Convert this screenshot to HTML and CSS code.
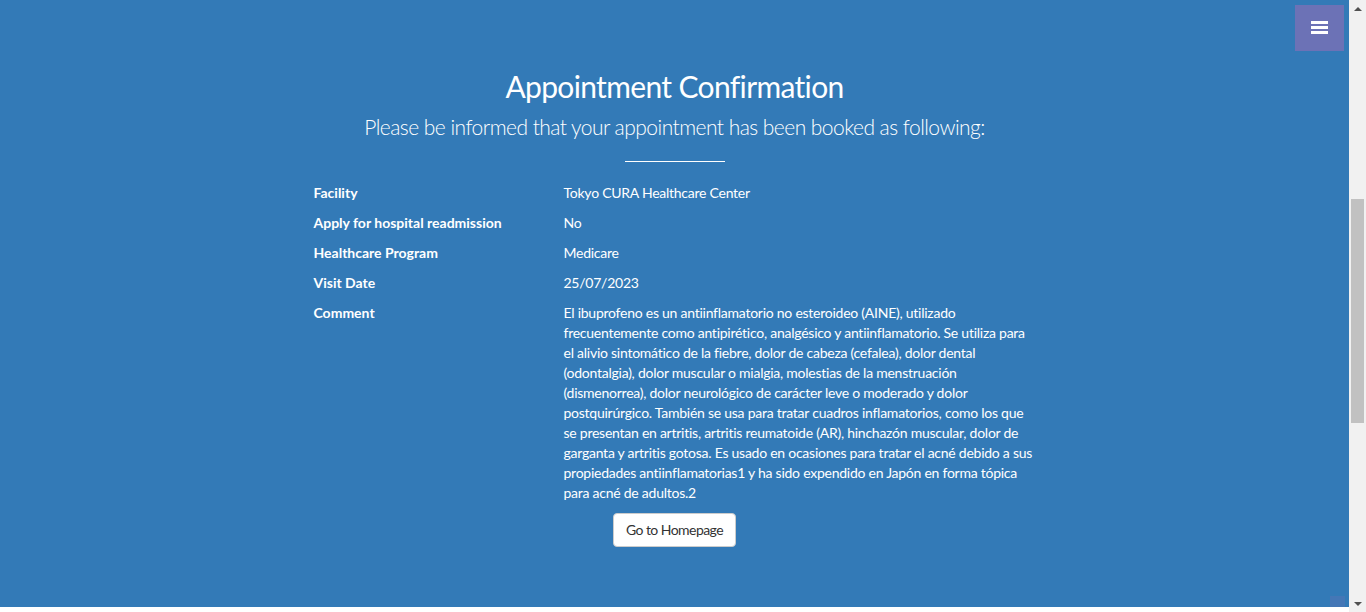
FILE: index.html
```html
<!DOCTYPE html>
<html lang="es">
<head>
<meta charset="utf-8">
<title>CURA Healthcare Service</title>
<link rel="stylesheet" href="styles.css">
</head>
<body>
<div class="window">
  <div class="page">
    <section class="summary" id="summary">
      <a class="menu-toggle" href="#" aria-label="Menu">
        <svg width="17" height="14" viewBox="0 0 17 14" aria-hidden="true">
          <rect x="0" y="0" width="17" height="3" fill="#fff"/>
          <rect x="0" y="5" width="17" height="3" fill="#fff"/>
          <rect x="0" y="10" width="17" height="3" fill="#fff"/>
        </svg>
      </a>
      <div class="intro">
        <h2 class="title">Appointment Confirmation</h2>
        <p class="lead">Please be informed that your appointment has been booked as following:</p>
        <hr class="small">
      </div>
      <div class="details">
        <div class="label">Facility</div>
        <p class="value">Tokyo CURA Healthcare Center</p>
        <div class="label">Apply for hospital readmission</div>
        <p class="value">No</p>
        <div class="label">Healthcare Program</div>
        <p class="value">Medicare</p>
        <div class="label">Visit Date</div>
        <p class="value">25/07/2023</p>
        <div class="label">Comment</div>
        <p class="value comment">El ibuprofeno es un antiinflamatorio no esteroideo (AINE), utilizado frecuentemente como antipirético, analgésico y antiinflamatorio. Se utiliza para el alivio sintomático de la fiebre, dolor de cabeza (cefalea), dolor dental (odontalgia), dolor muscular o mialgia, molestias de la menstruación (dismenorrea), dolor neurológico de carácter leve o moderado y dolor postquirúrgico. También se usa para tratar cuadros inflamatorios, como los que se presentan en artritis, artritis reumatoide (AR), hinchazón muscular, dolor de garganta y artritis gotosa. Es usado en ocasiones para tratar el acné debido a sus propiedades antiinflamatorias1 y ha sido expendido en Japón en forma tópica para acné de adultos.2</p>
      </div>
      <div class="actions">
        <a class="btn" href="#">Go to Homepage</a>
      </div>
      <a class="to-top" href="#" aria-label="Top"></a>
    </section>
    <footer class="footer"></footer>
  </div>
  <div class="scrollbar" aria-hidden="true">
    <div class="sb-btn"><span class="tri up"></span></div>
    <div class="sb-track"><div class="sb-thumb"></div></div>
    <div class="sb-btn"><span class="tri down"></span></div>
  </div>
</div>
</body>
</html>
```
FILE: styles.css
```css
html, body {
  margin: 0;
  padding: 0;
  height: 612px;
  overflow: hidden;
}
body {
  background: #fff;
  color: #fff;
  font-family: Lato, "Liberation Sans", sans-serif;
  font-size: 14px;
  line-height: 20px;
}
.window {
  display: flex;
  height: 612px;
}
.page {
  flex: 1;
  display: flex;
  flex-direction: column;
  min-width: 0;
}
.summary {
  position: relative;
  height: 607px;
  flex: none;
  box-sizing: border-box;
  background: #337ab7;
  padding-top: 68px;
  overflow: hidden;
}
.footer {
  flex: 1;
  background: #fff;
}
.intro {
  text-align: center;
}
.title {
  margin: 0;
  font-size: 30px;
  line-height: 36px;
  font-weight: 400;
  letter-spacing: -0.65px;
}
.lead {
  margin: 8px 0 0;
  font-size: 21px;
  line-height: 30px;
  font-weight: 300;
  letter-spacing: -0.54px;
}
hr.small {
  width: 100px;
  margin: 19px auto 21px;
  border: 0;
  border-top: 1px solid #fff;
}
.details {
  width: 722px;
  margin: 0 auto;
  display: grid;
  grid-template-columns: 250px 472px;
}
.label {
  font-weight: 700;
  margin-bottom: 10px;
}
.value {
  margin: 0 0 10px;
  letter-spacing: -0.25px;
}
.actions {
  display: flex;
  justify-content: center;
}
.btn {
  display: block;
  padding: 6px 12px;
  background: #fff;
  color: #333;
  border: 1px solid #ccc;
  border-radius: 4px;
  text-decoration: none;
  line-height: 20px;
  letter-spacing: -0.55px;
}
.menu-toggle {
  position: absolute;
  top: 5px;
  right: 5px;
  width: 49px;
  height: 46px;
  background: #6c72b6;
  display: flex;
  align-items: center;
  justify-content: center;
}
.menu-toggle svg {
  display: block;
}
.to-top {
  position: absolute;
  right: 4px;
  bottom: 0;
  width: 15px;
  height: 11px;
  background: rgba(108, 114, 182, 0.3);
}
.scrollbar {
  width: 17px;
  flex: none;
  display: flex;
  flex-direction: column;
  background: #f1f1f1;
}
.sb-btn {
  height: 17px;
  display: flex;
  align-items: center;
  justify-content: center;
}
.tri {
  width: 0;
  height: 0;
  border-left: 4px solid transparent;
  border-right: 4px solid transparent;
}
.tri.up {
  border-bottom: 4px solid #505050;
}
.tri.down {
  border-top: 4px solid #505050;
}
.sb-track {
  flex: 1;
  padding: 182px 2px 0;
}
.sb-thumb {
  height: 224px;
  background: #c1c1c1;
}
```
